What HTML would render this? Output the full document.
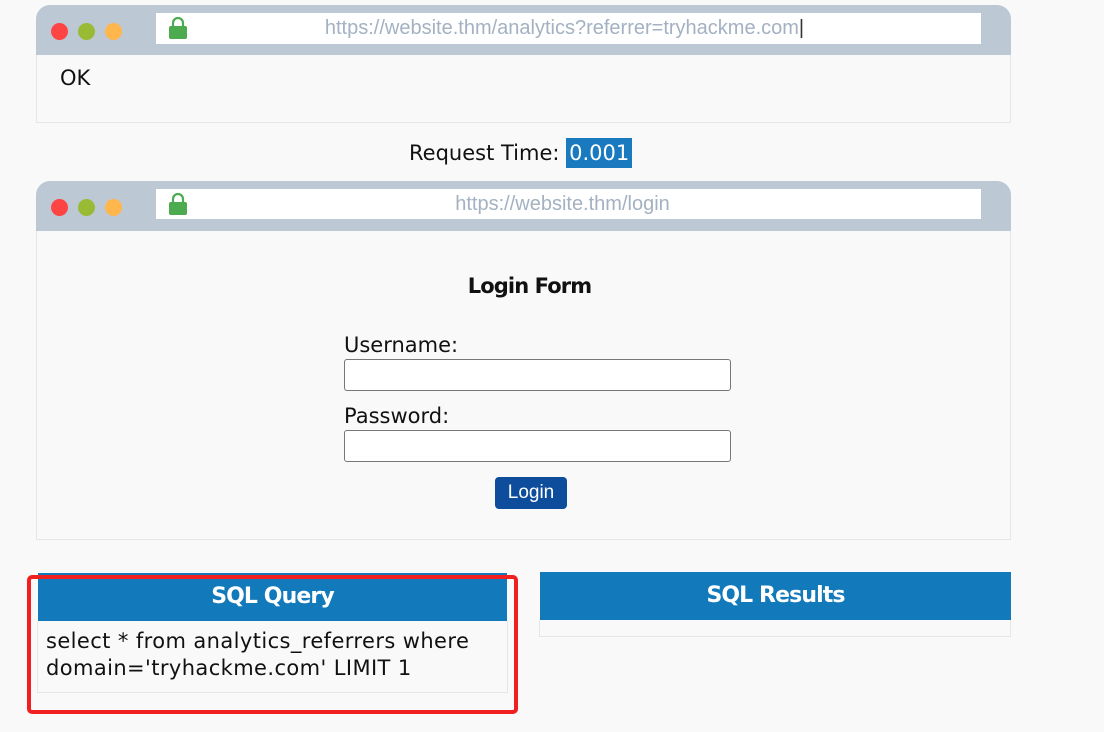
<!DOCTYPE html>
<html><head><style>
*{margin:0;padding:0;box-sizing:border-box}
body{width:1104px;height:732px;background:#f9f9f9;font-family:"DejaVu Sans","Liberation Sans",sans-serif;position:relative;overflow:hidden;color:#111}
.abs{position:absolute}
.hdr{background:#bcc8d3;border-radius:14px 14px 0 0}
.body{border:1px solid #e6e6e6;border-top:none;background:#f9f9f9}
.addr{background:#fff;font-family:"Liberation Sans",sans-serif;color:#a3b1c2;font-size:20px;text-align:center;line-height:31px}
.dot{width:17px;height:17px;border-radius:50%}
input{border:1px solid #777;border-radius:3px;background:#fff}
.bh{font-weight:bold;font-size:22px;letter-spacing:-0.9px;text-align:center;color:#fff;background:#1279bb}
</style></head><body>
<div class="abs hdr" style="left:36px;top:5px;width:975px;height:50px"></div>
<div class="abs body" style="left:36px;top:55px;width:975px;height:68px"></div>
<div class="abs dot" style="left:51px;top:23px;background:#ff4444"></div>
<div class="abs dot" style="left:78px;top:23px;background:#99bb33"></div>
<div class="abs dot" style="left:105px;top:23px;background:#ffb74d"></div>
<div class="abs addr" style="left:156px;top:13px;width:825px;height:31px;padding-right:8px">https://website.thm/analytics?referrer=tryhackme.com<span style="color:#333">|</span></div>
<svg class="abs" style="left:168px;top:16px" width="20" height="24"><path d="M5 10V7a5 5 0 0 1 10 0v3" stroke="#4caa4f" stroke-width="2.2" fill="none"/><rect x="1" y="10" width="18" height="13" rx="2" fill="#4caa4f"/></svg>
<div class="abs" style="left:60px;top:66px;font-size:21px">OK</div>

<div class="abs" style="left:409px;top:141px;font-size:21px">Request Time: <span style="background:#1a7abf;color:#fff;padding:3px 3px">0.001</span></div>

<div class="abs hdr" style="left:36px;top:181px;width:975px;height:50px"></div>
<div class="abs body" style="left:36px;top:231px;width:975px;height:309px"></div>
<div class="abs dot" style="left:51px;top:199px;background:#ff4444"></div>
<div class="abs dot" style="left:78px;top:199px;background:#99bb33"></div>
<div class="abs dot" style="left:105px;top:199px;background:#ffb74d"></div>
<div class="abs addr" style="left:156px;top:189px;width:825px;height:30px;padding-right:12px">https://website.thm/login</div>
<svg class="abs" style="left:168px;top:192px" width="20" height="24"><path d="M5 10V7a5 5 0 0 1 10 0v3" stroke="#4caa4f" stroke-width="2.2" fill="none"/><rect x="1" y="10" width="18" height="13" rx="2" fill="#4caa4f"/></svg>
<div class="abs" style="left:42px;width:975px;top:274px;text-align:center;font-size:21px;font-weight:bold;letter-spacing:-0.9px">Login Form</div>
<div class="abs" style="left:344px;top:333px;font-size:21px">Username:</div>
<input class="abs" style="left:344px;top:359px;width:387px;height:32px">
<div class="abs" style="left:344px;top:404px;font-size:21px">Password:</div>
<input class="abs" style="left:344px;top:430px;width:387px;height:32px">
<div class="abs" style="left:495px;top:477px;width:72px;height:32px;background:#0d4d9b;color:#fff;border-radius:4px;font-family:'Liberation Sans',sans-serif;font-size:19px;text-align:center;line-height:32px">Login</div>

<div class="abs bh" style="left:38px;top:573px;width:469px;height:48px;line-height:48px">SQL Query</div>
<div class="abs" style="left:37px;top:621px;width:471px;height:72px;border:1px solid #e6e6e6;border-top:none;padding:7px 6px 7px 8px;font-size:21px;line-height:27px;letter-spacing:0.4px">select * from analytics_referrers where domain='tryhackme.com' LIMIT 1</div>
<div class="abs" style="left:27px;top:575px;width:491px;height:139px;border:4px solid #f02020;border-radius:5px"></div>

<div class="abs bh" style="left:540px;top:572px;width:471px;height:48px;line-height:48px">SQL Results</div>
<div class="abs" style="left:539px;top:620px;width:472px;height:17px;border:1px solid #e6e6e6;border-top:none"></div>
</body></html>
